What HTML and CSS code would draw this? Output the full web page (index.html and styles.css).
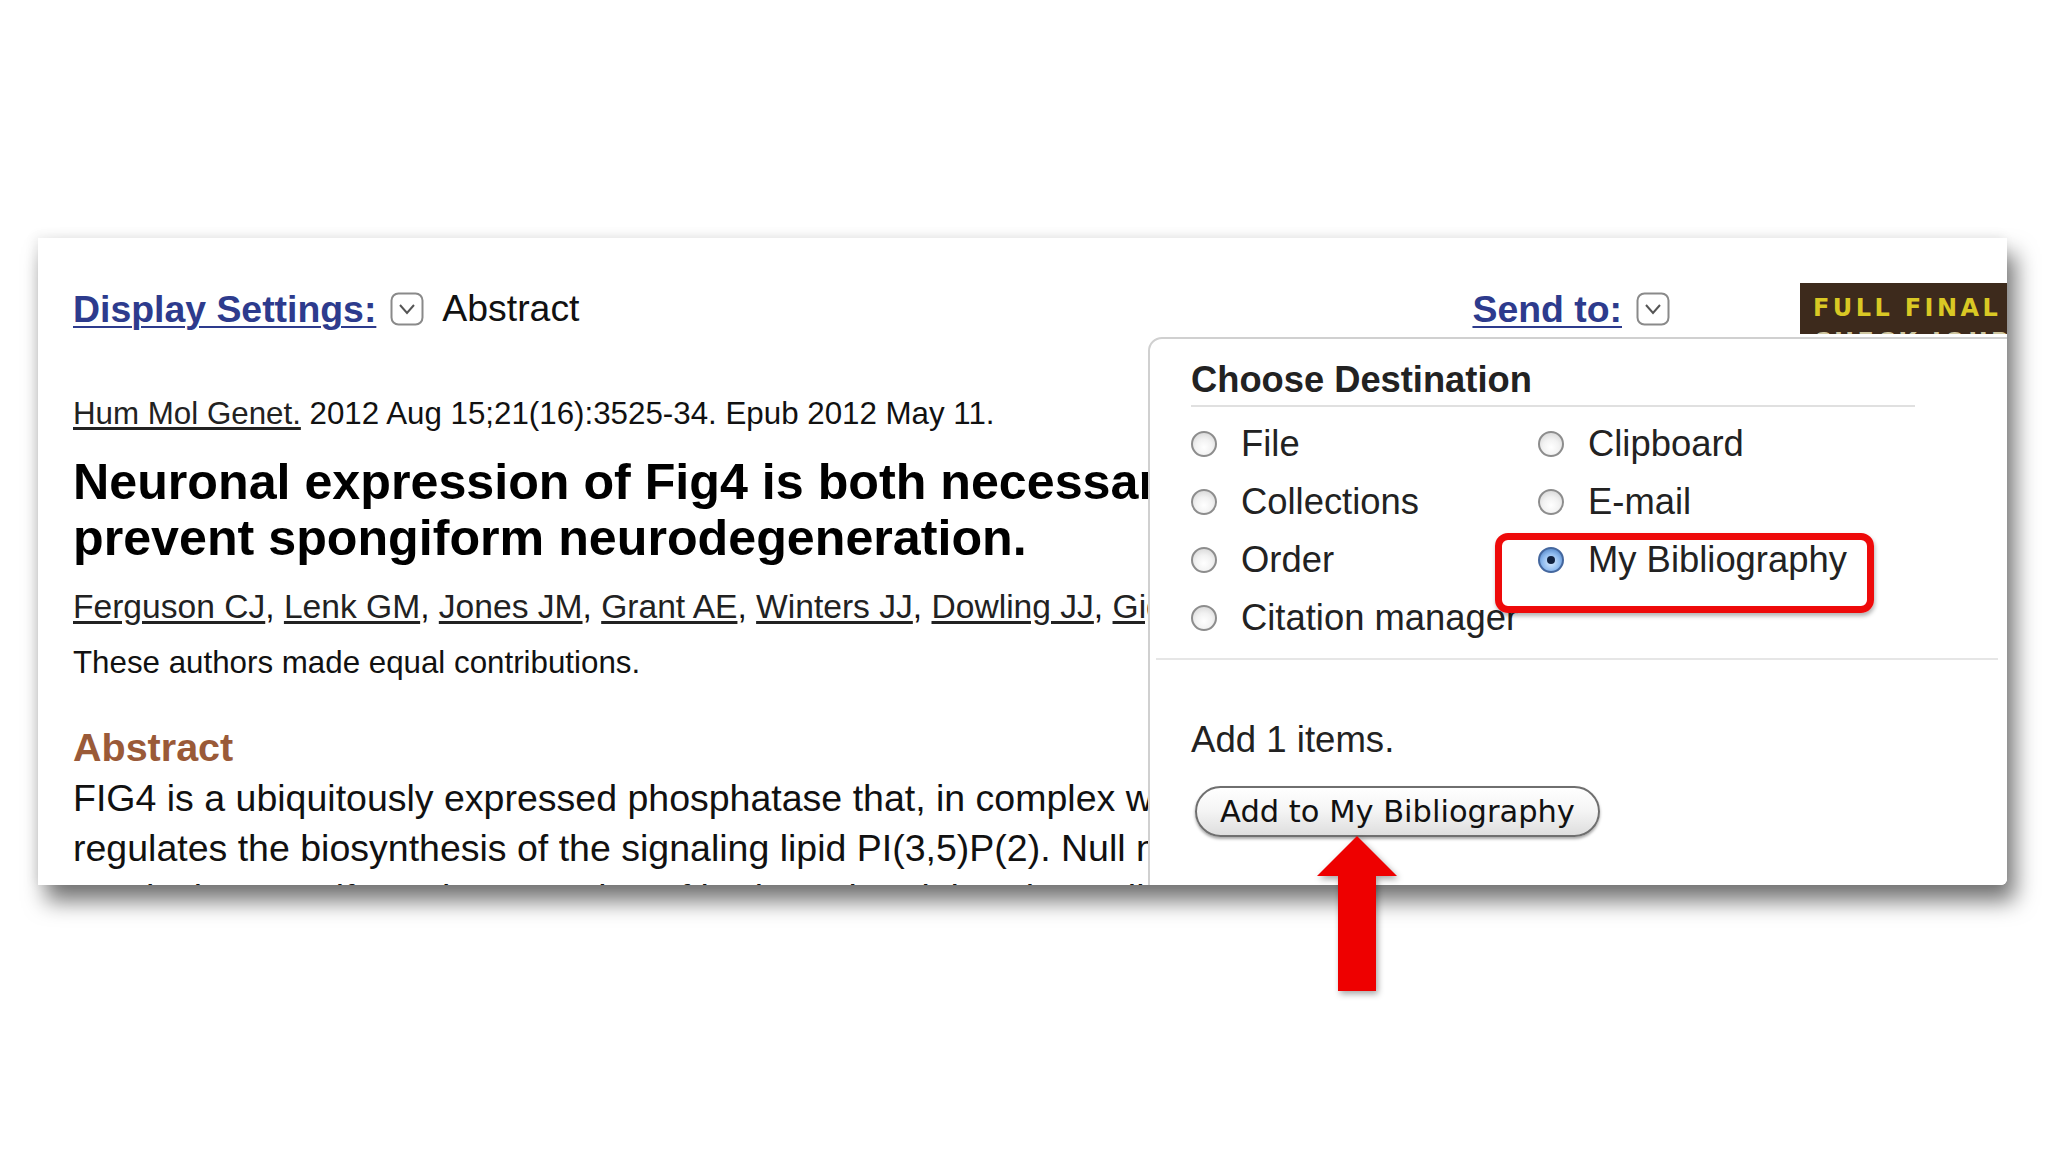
FILE: index.html
```html
<!DOCTYPE html>
<html>
<head>
<meta charset="utf-8">
<link rel="stylesheet" href="styles.css">
</head>
<body>
<div class="stage">
  <div class="card">
    <div class="header">
      <div class="hgroup">
        <a class="hlink">Display Settings:</a>
        <span class="dd"><svg viewBox="0 0 34 34" width="34" height="34"><rect x="1.5" y="1.5" width="31" height="31" rx="7" fill="#fff" stroke="#8a8a8a" stroke-width="2"/><path d="M10 13 L17 21 L24 13" fill="none" stroke="#555" stroke-width="2"/></svg></span>
        <span class="hval">Abstract</span>
      </div>
      <div class="hgroup right">
        <a class="hlink">Send to:</a>
        <span class="dd"><svg viewBox="0 0 34 34" width="34" height="34"><rect x="1.5" y="1.5" width="31" height="31" rx="7" fill="#fff" stroke="#8a8a8a" stroke-width="2"/><path d="M10 13 L17 21 L24 13" fill="none" stroke="#555" stroke-width="2"/></svg></span>
        <div class="badge"><div class="b1">FULL FINAL</div><div class="b2">CHECK JOURNAL</div></div>
      </div>
    </div>

    <div class="citation"><a class="ulink">Hum Mol Genet.</a> 2012 Aug 15;21(16):3525-34. Epub 2012 May 11.</div>
    <h1 class="title">Neuronal expression of Fig4 is both necessary and sufficient to<br>prevent spongiform neurodegeneration.</h1>
    <div class="authors"><a class="ulink">Ferguson CJ</a>, <a class="ulink">Lenk GM</a>, <a class="ulink">Jones JM</a>, <a class="ulink">Grant AE</a>, <a class="ulink">Winters JJ</a>, <a class="ulink">Dowling JJ</a>, <a class="ulink">Giger RJ</a>, <a class="ulink">Meisler MH</a>.</div>
    <div class="note">These authors made equal contributions.</div>
    <h2 class="abs-head">Abstract</h2>
    <p class="abs-body">FIG4 is a ubiquitously expressed phosphatase that, in complex with FAB1/PIKfyve and VAC14,<br>regulates the biosynthesis of the signaling lipid PI(3,5)P(2). Null mutation of Fig4 in the mouse<br>results in spongiform degeneration of brain and peripheral ganglia, defective myelination</p>

    <div class="popup">
      <div class="pop-title">Choose Destination</div>
      <div class="options">
        <label class="opt"><span class="radio"></span>File</label>
        <label class="opt"><span class="radio"></span>Clipboard</label>
        <label class="opt"><span class="radio"></span>Collections</label>
        <label class="opt"><span class="radio"></span>E-mail</label>
        <label class="opt"><span class="radio"></span>Order</label>
        <label class="opt"><span class="radio on"></span>My Bibliography</label>
        <label class="opt"><span class="radio"></span>Citation manager</label>
      </div>
      <div class="pop-sep"></div>
      <div class="add-text">Add 1 items.</div>
      <button class="add-btn">Add to My Bibliography</button>
      <div class="highlight"></div>
    </div>
  </div>
  <svg class="arrow" width="100" height="170" viewBox="0 0 100 170"><path d="M51 4 L91 44 L70 44 L70 159 L32 159 L32 44 L11 44 Z" fill="#ee0000"/></svg>
</div>
</body>
</html>
```
FILE: styles.css
```css
html, body {
  margin: 0;
  padding: 0;
  background: #fff;
}
body {
  font-family: "Liberation Sans", Arial, sans-serif;
  color: #111;
}
.stage {
  position: relative;
  width: 2048px;
  height: 1151px;
  padding: 238px 0 0 38px;
  box-sizing: border-box;
}
.card {
  position: relative;
  width: 1969px;
  height: 647px;
  background: #fff;
  overflow: hidden;
  border-radius: 0 0 6px 0;
  box-shadow: 8px 16px 22px rgba(0, 0, 0, 0.55), -3px -2px 12px rgba(0, 0, 0, 0.07);
  padding: 45px 0 0 35px;
  box-sizing: border-box;
}
.header {
  display: flex;
  align-items: center;
  height: 51px;
}
.hgroup {
  display: flex;
  align-items: center;
}
.hgroup.right {
  margin-left: auto;
}
.hlink {
  font-weight: bold;
  font-size: 37.4px;
  color: #2d3b8d;
  text-decoration: underline;
  text-decoration-thickness: 2px;
  text-underline-offset: 4px;
  line-height: 44px;
}
.dd {
  display: flex;
  margin-left: 14px;
}
.dd svg {
  display: block;
}
.hval {
  font-size: 37.4px;
  margin-left: 18px;
  color: #111;
}
.badge {
  margin-left: 130px;
  width: 207px;
  height: 51px;
  background: #3d2a1c;
  color: #d9c824;
  font-family: "DejaVu Sans", sans-serif;
  font-weight: bold;
  font-size: 24px;
  letter-spacing: 3.4px;
  padding: 12px 0 0 13px;
  box-sizing: border-box;
  overflow: hidden;
  white-space: nowrap;
}
.b1 {
  line-height: 26px;
}
.b2 {
  line-height: 26px;
  margin-top: 8px;
  color: #cfc6a0;
}
.citation {
  margin-top: 60px;
  font-size: 31.3px;
  line-height: 40px;
  white-space: nowrap;
}
.ulink {
  color: #222;
  text-decoration: underline;
  text-underline-offset: 3px;
}
.title {
  margin: 20px 0 0;
  font-size: 50.2px;
  line-height: 56px;
  font-weight: bold;
  color: #000;
  white-space: nowrap;
}
.authors {
  margin-top: 21px;
  font-size: 33.6px;
  line-height: 40px;
  white-space: nowrap;
}
.note {
  margin-top: 16px;
  font-size: 31.3px;
  line-height: 40px;
  white-space: nowrap;
}
.abs-head {
  margin: 41px 0 0;
  font-size: 39.5px;
  line-height: 46px;
  font-weight: bold;
  color: #9a5a38;
}
.abs-body {
  margin: 3px 0 0;
  font-size: 37.5px;
  line-height: 50px;
  white-space: nowrap;
}
.popup {
  position: absolute;
  left: 1110px;
  top: 99px;
  right: -20px;
  bottom: -20px;
  background: #fff;
  border: 2px solid #d0d0d0;
  border-top-left-radius: 14px;
  padding: 0 0 0 41px;
  box-sizing: border-box;
  color: #222;
}
.pop-title {
  width: 724px;
  padding-top: 19px;
  font-size: 36.3px;
  font-weight: bold;
  line-height: 44px;
  padding-bottom: 3px;
  border-bottom: 2px solid #e0e0e0;
  color: #222;
}
.options {
  margin-top: 8px;
  display: grid;
  grid-template-columns: 347px auto;
}
.opt {
  display: flex;
  align-items: center;
  height: 58px;
  font-size: 36.4px;
  white-space: nowrap;
}
.radio {
  width: 22px;
  height: 22px;
  border-radius: 50%;
  border: 2px solid #8d8d8d;
  background: radial-gradient(circle at 50% 65%, #ffffff 0%, #f2f2f2 45%, #cfcfcf 100%);
  margin-right: 24px;
  flex: none;
  position: relative;
}
.radio.on {
  border-color: #44679e;
  background: radial-gradient(circle at 50% 60%, #d9ecff 0%, #8fbbef 50%, #3b6fb7 100%);
}
.radio.on::after {
  content: "";
  position: absolute;
  left: 7px;
  top: 7px;
  width: 8px;
  height: 8px;
  border-radius: 50%;
  background: #10213f;
}
.pop-sep {
  margin: 11px 0 0 -35px;
  width: 842px;
  border-top: 2px solid #e6e6e6;
}
.add-text {
  margin-top: 58px;
  font-size: 36.6px;
  line-height: 44px;
}
.add-btn {
  display: block;
  margin: 24px 0 0 4px;
  width: 405px;
  height: 51px;
  border-radius: 26px;
  border: 2px solid #6f6f6f;
  background: linear-gradient(#ffffff 0%, #f4f4f4 50%, #dedede 100%);
  box-shadow: 0 2px 3px rgba(0, 0, 0, 0.35);
  font-family: "DejaVu Sans", sans-serif;
  font-size: 30.5px;
  color: #111;
  padding: 0;
}
.highlight {
  position: absolute;
  left: 345px;
  top: 194px;
  width: 379px;
  height: 80px;
  border: 7px solid #ee0a0a;
  border-radius: 13px;
  box-sizing: border-box;
  box-shadow: 1px 3px 4px rgba(0, 0, 0, 0.3);
}
.arrow {
  position: absolute;
  left: 1306px;
  top: 832px;
  filter: drop-shadow(2px 3px 3px rgba(0, 0, 0, 0.35));
}
```
